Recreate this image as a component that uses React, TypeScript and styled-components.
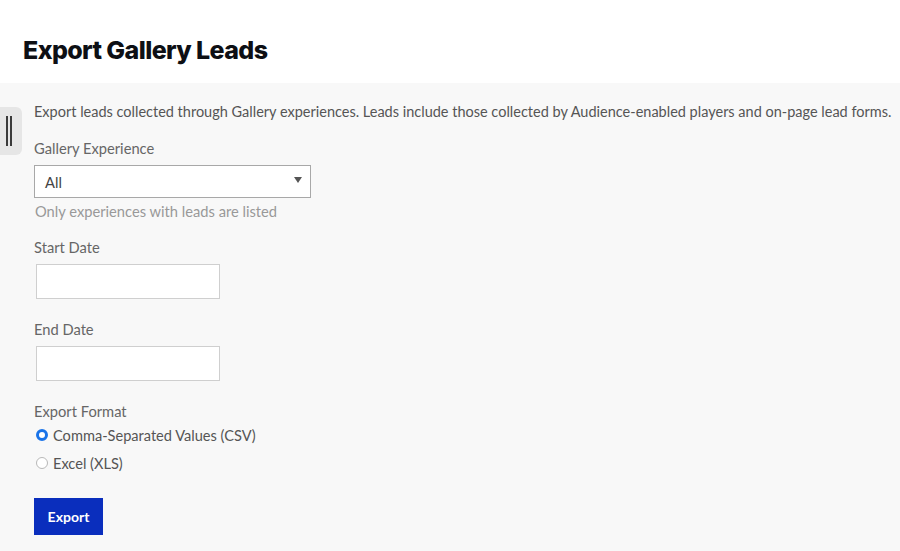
import React from "react";
import styled, { createGlobalStyle } from "styled-components";

const Global = createGlobalStyle`
  html, body { margin: 0; padding: 0; background: #f8f8f8; }
  body { font-family: Lato, "Noto Sans", sans-serif; }
  * { box-sizing: border-box; }
`;

const Page = styled.div`
  width: 900px;
  height: 551px;
  overflow: hidden;
  display: flex;
  flex-direction: column;
`;

const Header = styled.header`
  background: #ffffff;
  height: 83px;
  padding: 34px 0 0 23px;
  flex-shrink: 0;
`;

const Title = styled.h1`
  margin: 0;
  font-family: Inter, "Noto Sans", sans-serif;
  font-weight: 800;
  font-size: 25px;
  letter-spacing: -0.6px;
  color: #0d0f14;
  line-height: 32px;
`;

const Body = styled.div`
  flex: 1;
  background: #f8f8f8;
  display: flex;
  position: relative;
`;

const SideTab = styled.div`
  position: absolute;
  left: 0;
  top: 24px;
  width: 22px;
  height: 48px;
  background: #e6e6e6;
  border-radius: 0 6px 6px 0;
  display: flex;
  justify-content: flex-start;
  padding-left: 6px;
  gap: 2px;
  align-items: center;
`;

const Bar = styled.span`
  display: block;
  width: 2px;
  height: 30px;
  background: #3a3a3a;
`;

const Content = styled.main`
  padding: 19px 0 0 34px;
  display: flex;
  flex-direction: column;
  color: #555;
  font-size: 14.7px;
`;

const Intro = styled.p`
  margin: 0 0 16px;
  line-height: 20px;
  font-size: 14.5px;
  color: #555;
  white-space: nowrap;
`;

const Label = styled.label<{ $mb?: number }>`
  display: block;
  line-height: 20px;
  color: #666;
  margin-bottom: ${(p) => p.$mb ?? 7}px;
`;

const Field = styled.div<{ $gap: number }>`
  margin-bottom: ${(p) => p.$gap}px;
`;

const SelectBox = styled.div`
  width: 277px;
  height: 33px;
  border: 1px solid #a8a8a8;
  background: #fff;
  display: flex;
  align-items: center;
  justify-content: space-between;
  padding: 0 8px 0 10px;
  color: #444;
  font-size: 14.7px;
`;

const Caret = styled.span`
  width: 0;
  height: 0;
  border-left: 4px solid transparent;
  border-right: 4px solid transparent;
  border-top: 6px solid #555;
  margin-top: -4px;
`;

const Help = styled.div`
  color: #999;
  line-height: 20px;
  margin-top: 3px;
  padding-left: 1px;
`;

const TextInput = styled.div<{ $mt: number }>`
  width: 184px;
  height: 35px;
  margin: ${(p) => p.$mt}px 0 0 2px;
  border: 1px solid #cfcfcf;
  background: #fff;
`;

const RadioRow = styled.div`
  display: flex;
  align-items: center;
  gap: 5px;
  height: 20px;
  font-size: 14.6px;
  color: #555;
  margin-bottom: 8px;
`;

const RadioDot = styled.span<{ $on?: boolean }>`
  width: 12px;
  height: 12px;
  border-radius: 50%;
  margin-left: 2px;
  box-sizing: border-box;
  background: #fff;
  border: ${(p) => (p.$on ? "3.5px solid #1a73e8" : "1px solid #b8b8b8")};
`;

const Button = styled.button`
  margin-top: 17px;
  width: 69px;
  height: 37px;
  border: none;
  background: #0a2ebd;
  color: #fff;
  font-family: Lato, "Noto Sans", sans-serif;
  font-weight: 700;
  font-size: 14px;
  padding: 0;
`;

export default function App() {
  return (
    <Page>
      <Global />
      <Header>
        <Title>Export Gallery Leads</Title>
      </Header>
      <Body>
        <SideTab>
          <Bar />
          <Bar />
        </SideTab>
        <Content>
          <Intro>
            Export leads collected through Gallery experiences. Leads include those collected by Audience-enabled players and on-page lead forms.
          </Intro>
          <Field $gap={16}>
            <Label>Gallery Experience</Label>
            <SelectBox>
              <span>All</span>
              <Caret />
            </SelectBox>
            <Help>Only experiences with leads are listed</Help>
          </Field>
          <Field $gap={20}>
            <Label>Start Date</Label>
            <TextInput $mt={2} />
          </Field>
          <Field $gap={20}>
            <Label>End Date</Label>
            <TextInput $mt={1} />
          </Field>
          <Field $gap={0}>
            <Label $mb={4}>Export Format</Label>
            <RadioRow>
              <RadioDot $on />
              <span>Comma-Separated Values (CSV)</span>
            </RadioRow>
            <RadioRow>
              <RadioDot />
              <span>Excel (XLS)</span>
            </RadioRow>
          </Field>
          <div>
            <Button>Export</Button>
          </div>
        </Content>
      </Body>
    </Page>
  );
}
